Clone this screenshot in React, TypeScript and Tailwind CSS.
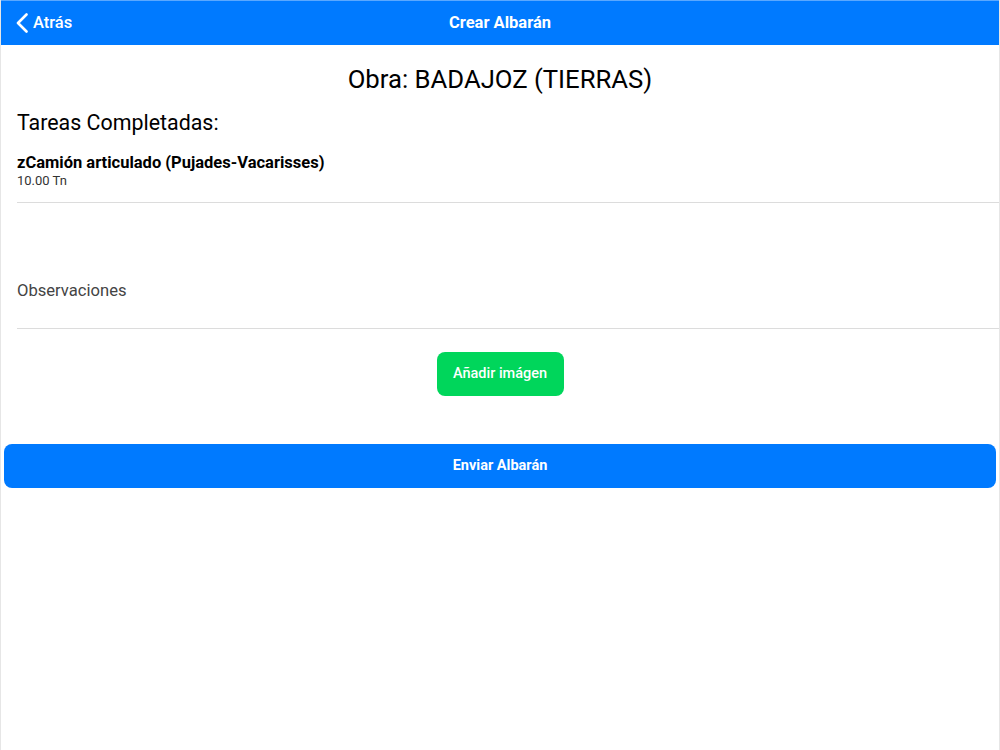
export default function App() {
  return (
    <div
      className="flex h-[750px] w-[1000px] flex-col border-x border-[#e6e6e6] bg-white text-black"
      style={{ fontFamily: "Roboto, 'Noto Sans', sans-serif" }}
    >
      {/* header */}
      <div className="relative flex h-[45px] items-center border-t border-[#5aa8ff] bg-[#007aff] text-white">
        <button type="button" className="absolute left-[15px] flex items-center gap-[5px] text-[16.5px] font-medium">
          <svg width="12" height="20" viewBox="0 0 12 20" fill="none">
            <polyline points="10.5,1.5 2,10 10.5,18.5" stroke="white" strokeWidth="2.6" strokeLinecap="round" strokeLinejoin="round" />
          </svg>
          <span>Atrás</span>
        </button>
        <h1 className="w-full text-center text-[16.5px] font-bold">Crear Albarán</h1>
      </div>

      <h2 className="mt-[18px] text-center text-[25.7px] leading-[32px]">Obra: BADAJOZ (TIERRAS)</h2>

      <h3 className="mt-[15px] pl-4 text-[21.4px] leading-[26px]">Tareas Completadas:</h3>

      <div className="ml-4 mt-[17px] border-b border-[#dcdcdc] pb-[13px]">
        <div className="text-[16.5px] font-bold leading-[20px]">zCamión articulado (Pujades-Vacarisses)</div>
        <div className="text-[13px] leading-[16px] text-[#333]">10.00 Tn</div>
      </div>

      <div className="ml-4 flex h-[126px] items-end border-b border-[#dcdcdc] pb-[24px]">
        <span className="text-[16.6px] text-[#444]">Observaciones</span>
      </div>

      <div className="mt-[23px] flex justify-center">
        <button
          type="button"
          className="h-[44px] w-[127px] rounded-[8px] bg-[#00d65b] text-[14.5px] font-medium text-white"
        >
          Añadir imágen
        </button>
      </div>

      <div className="mt-[48px] px-[3px]">
        <button
          type="button"
          className="h-[44px] w-full rounded-[8px] bg-[#007aff] text-[14.5px] font-bold text-white"
        >
          Enviar Albarán
        </button>
      </div>
    </div>
  );
}
